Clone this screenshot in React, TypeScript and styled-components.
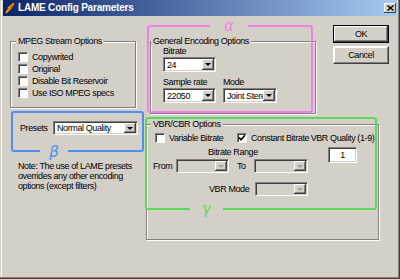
import React from 'react';
import styled, { createGlobalStyle } from 'styled-components';

const GlobalStyle = createGlobalStyle`
  html, body {
    margin: 0;
    padding: 0;
    background: #d4d0c8;
  }
  body {
    font-family: "Liberation Sans", Arial, sans-serif;
    font-size: 9px;
    letter-spacing: -0.4px;
    line-height: 10px;
    color: #000;
  }
`;

const Window = styled.div`
  position: relative;
  width: 400px;
  height: 279px;
  box-sizing: border-box;
  background: #d4d0c8;
  box-shadow: inset -1px -1px #404040, inset -2px -2px #808080, inset 1px 1px #d4d0c8, inset 2px 2px #ffffff;
  overflow: hidden;
`;

const TitleBar = styled.div`
  height: 16px;
  margin: 0 3px;
  padding: 0 1px;
  display: flex;
  align-items: center;
  background: linear-gradient(to right, #0a246a, #a6caf0);
`;

const TitleText = styled.div`
  margin-left: 2px;
  color: #fff;
  font-family: "Liberation Sans", Arial, sans-serif;
  font-weight: bold;
  font-size: 10px;
  letter-spacing: -0.2px;
`;

const CloseButton = styled.div`
  margin-left: auto;
  width: 12px;
  height: 10px;
  box-sizing: border-box;
  display: flex;
  align-items: center;
  justify-content: center;
  background: #d4d0c8;
  box-shadow: inset -1px -1px #404040, inset 1px 1px #fff;
`;

const Body = styled.div`
  display: flex;
  padding-left: 10px;
`;

const LeftColumn = styled.div`
  width: 133px;
  display: flex;
  flex-direction: column;
`;

const RightArea = styled.div`
  margin-left: 3px;
  display: flex;
  flex-direction: column;
`;

const TopRow = styled.div`
  display: flex;
  align-items: flex-start;
`;

const Group = styled.fieldset<{ $w: number; $pad: string }>`
  margin: 0;
  min-width: 0;
  width: ${p => p.$w}px;
  box-sizing: border-box;
  padding: ${p => p.$pad};
  border: 1px solid #808080;
  box-shadow: inset 1px 1px #fff, 1px 1px #fff;
`;

const Legend = styled.legend<{ $shift: number }>`
  margin-left: ${p => p.$shift}px;
  padding: 0 2px;
  line-height: 10px;
  background: #d4d0c8;
`;

const CheckRow = styled.div<{ $h?: number }>`
  display: flex;
  align-items: center;
  height: ${p => p.$h ?? 12}px;
`;

const CheckItem = styled.div<{ $w?: number; $ml?: number }>`
  display: flex;
  align-items: center;
  gap: 4px;
  white-space: nowrap;
  width: ${p => (p.$w ? `${p.$w}px` : 'auto')};
  margin-left: ${p => p.$ml ?? 0}px;
`;

const Box = styled.div`
  width: 10px;
  height: 10px;
  box-sizing: border-box;
  flex-shrink: 0;
  display: flex;
  align-items: center;
  justify-content: center;
  background: #fff;
  border: 1px solid;
  border-color: #808080 #fff #fff #808080;
  box-shadow: inset 1px 1px #404040;
`;

const SelectBox = styled.div<{ $w: number; $h?: number; $disabled?: boolean }>`
  width: ${p => p.$w}px;
  height: ${p => p.$h ?? 15}px;
  box-sizing: border-box;
  flex-shrink: 0;
  display: flex;
  padding: 1px;
  border: 1px solid;
  border-color: #808080 #fff #fff #808080;
  box-shadow: inset 1px 1px #404040, inset -1px -1px #d4d0c8;
  background: ${p => (p.$disabled ? '#d4d0c8' : '#fff')};
`;

const SelectValue = styled.div`
  flex: 1;
  min-width: 0;
  padding-left: 2px;
  overflow: hidden;
  white-space: nowrap;
  display: flex;
  align-items: center;
`;

const ArrowButton = styled.div`
  width: 12px;
  flex-shrink: 0;
  display: flex;
  align-items: center;
  justify-content: center;
  background: #d4d0c8;
  box-shadow: inset -1px -1px #404040, inset 1px 1px #fff, inset -2px -2px #808080;
`;

const Arrow = styled.div<{ $disabled?: boolean }>`
  width: 0;
  height: 0;
  border-left: 3px solid transparent;
  border-right: 3px solid transparent;
  border-top: 3px solid ${p => (p.$disabled ? '#a0a0a0' : '#000')};
`;

const FieldLabel = styled.div`
  line-height: 10px;
  white-space: nowrap;
`;

const Stack = styled.div<{ $mt?: number }>`
  display: flex;
  flex-direction: column;
  gap: 1px;
  margin-top: ${p => p.$mt ?? 0}px;
`;

const Pair = styled.div`
  display: flex;
  gap: 7px;
  margin-top: 5px;
`;

const GroupWrap = styled.div<{ $mt: number; $ml?: number }>`
  position: relative;
  margin-top: ${p => p.$mt}px;
  margin-left: ${p => p.$ml ?? 0}px;
`;

const Annotation = styled.div<{ $color: string; $top: number; $left: number; $w: number; $h: number }>`
  position: absolute;
  top: ${p => p.$top}px;
  left: ${p => p.$left}px;
  width: ${p => p.$w}px;
  height: ${p => p.$h}px;
  box-sizing: border-box;
  border: 2px solid ${p => p.$color};
  border-radius: 3px;
  pointer-events: none;
`;

const Mark = styled.div<{ $color: string; $left: number; $w: number; $top?: number; $bottom?: number }>`
  position: absolute;
  left: ${p => p.$left}px;
  width: ${p => p.$w}px;
  ${p => (p.$top !== undefined ? `top: ${p.$top}px;` : '')}
  ${p => (p.$bottom !== undefined ? `bottom: ${p.$bottom}px;` : '')}
  height: 16px;
  line-height: 16px;
  text-align: center;
  background: #d4d0c8;
  color: ${p => p.$color};
  font-family: "DejaVu Sans", sans-serif;
  font-style: italic;
  font-size: 15px;
  letter-spacing: 0;
`;

const PresetsFrame = styled.div`
  position: relative;
  margin: 3px 0 0 1px;
  width: 133px;
  height: 41px;
  box-sizing: border-box;
  border: 2px solid #4f8ff0;
  border-radius: 3px;
  padding: 8px 0 0 7px;
  display: flex;
  align-items: flex-start;
`;

const PresetsLabel = styled.div`
  width: 33px;
  line-height: 14px;
`;

const Note = styled.div`
  margin-top: 9px;
  padding-left: 8px;
  line-height: 10px;
  white-space: nowrap;
`;

const ButtonColumn = styled.div`
  margin: 9px 0 0 17px;
  display: flex;
  flex-direction: column;
  gap: 3px;
`;

const Button = styled.div<{ $default?: boolean }>`
  width: 56px;
  height: 18px;
  box-sizing: border-box;
  display: flex;
  align-items: center;
  justify-content: center;
  background: #d4d0c8;
  border: 1px solid ${p => (p.$default ? '#000' : 'transparent')};
  box-shadow: ${p =>
    p.$default
      ? 'inset -1px -1px #404040, inset 1px 1px #fff, inset -2px -2px #808080'
      : 'inset -1px -1px #808080, inset 1px 1px #fff'};
  ${p => (!p.$default ? 'border-color: #fff #404040 #404040 #fff;' : '')}
`;

const VbrBody = styled.div`
  display: flex;
`;

const VbrLeft = styled.div`
  width: 159px;
  display: flex;
  flex-direction: column;
`;

const RangeTitle = styled.div`
  margin-top: 4px;
  padding-left: 55px;
  line-height: 10px;
`;

const FromRow = styled.div`
  margin-top: 2px;
  display: flex;
  align-items: center;
  height: 14px;
`;

const RowLabel = styled.div<{ $w: number; $ml?: number }>`
  width: ${p => p.$w}px;
  margin-left: ${p => p.$ml ?? 0}px;
  white-space: nowrap;
`;

const ModeRow = styled.div`
  margin-top: 9px;
  padding-left: 56px;
  display: flex;
  align-items: center;
  height: 14px;
`;

const QualityPane = styled.div`
  width: 61px;
  display: flex;
  flex-direction: column;
  align-items: center;
`;

const QualityLabel = styled.div`
  height: 10px;
  display: flex;
  align-items: center;
  white-space: nowrap;
`;

const EditBox = styled.div`
  margin-top: 4px;
  width: 29px;
  height: 16px;
  box-sizing: border-box;
  display: flex;
  align-items: center;
  justify-content: center;
  background: #fff;
  border: 1px solid;
  border-color: #808080 #fff #fff #808080;
  box-shadow: inset 1px 1px #404040, inset -1px -1px #d4d0c8;
`;

function Select({ w, h, value, disabled }: { w: number; h?: number; value?: string; disabled?: boolean }) {
  return (
    <SelectBox $w={w} $h={h} $disabled={disabled}>
      <SelectValue>{value}</SelectValue>
      <ArrowButton>
        <Arrow $disabled={disabled} />
      </ArrowButton>
    </SelectBox>
  );
}

function Check({ label, checked, w, ml }: { label: string; checked?: boolean; w?: number; ml?: number }) {
  return (
    <CheckItem $w={w} $ml={ml}>
      <Box>
        {checked && (
          <svg width="8" height="8" viewBox="0 0 8 8">
            <path d="M1 3.5 L3 5.8 L7 1.2" fill="none" stroke="#000" strokeWidth="1.6" />
          </svg>
        )}
      </Box>
      {label}
    </CheckItem>
  );
}

function LameIcon() {
  return (
    <svg width="12" height="12" viewBox="0 0 12 12">
      <path d="M1 11 L4 6 L3.5 5.5 L9 0.8 L11 1.5 L7.5 6 L8 6.5 L2.5 11.5 Z" fill="#f4b820" stroke="#5a3000" strokeWidth="0.8" />
      <path d="M4 8 L8.5 3 M5.5 8.5 L9.5 4" stroke="#c84800" strokeWidth="0.9" />
    </svg>
  );
}

export default function App() {
  return (
    <>
      <GlobalStyle />
      <Window>
        <TitleBar>
          <LameIcon />
          <TitleText>LAME Config Parameters</TitleText>
          <CloseButton>
            <svg width="7" height="6" viewBox="0 0 7 6">
              <path d="M0.5 0.5 L6.5 5.5 M6.5 0.5 L0.5 5.5" stroke="#000" strokeWidth="1.4" />
            </svg>
          </CloseButton>
        </TitleBar>
        <Body>
          <LeftColumn>
            <GroupWrap $mt={20}>
              <Group $w={126} $pad="5px 0 8px 7px">
                <Legend $shift={-2}>MPEG Stream Options</Legend>
                <CheckRow><Check label="Copywrited" /></CheckRow>
                <CheckRow><Check label="Original" /></CheckRow>
                <CheckRow><Check label="Disable Bit Reservoir" /></CheckRow>
                <CheckRow><Check label="Use ISO MPEG specs" /></CheckRow>
              </Group>
            </GroupWrap>
            <PresetsFrame>
              <PresetsLabel>Presets</PresetsLabel>
              <Select w={85} h={14} value="Normal Quality" />
              <Mark $color="#4f8ff0" $left={27} $w={28} $bottom={-10}>β</Mark>
            </PresetsFrame>
            <Note>
              Note: The use of LAME presets
              <br />
              overrides any other encoding
              <br />
              options (except filters)
            </Note>
          </LeftColumn>
          <RightArea>
            <TopRow>
              <GroupWrap $mt={20} $ml={4}>
                <Group $w={166} $pad="0 0 10px 12px">
                  <Legend $shift={-12}>General Encoding Options</Legend>
                  <Stack>
                    <FieldLabel>Bitrate</FieldLabel>
                    <Select w={53} value="24" />
                  </Stack>
                  <Pair>
                    <Stack>
                      <FieldLabel>Sample rate</FieldLabel>
                      <Select w={53} value="22050" />
                    </Stack>
                    <Stack>
                      <FieldLabel>Mode</FieldLabel>
                      <Select w={54} value="Joint Stereo" />
                    </Stack>
                  </Pair>
                </Group>
                <Annotation $color="#f47fe8" $top={-11} $left={-3} $w={166} $h={88}>
                  <Mark $color="#f47fe8" $left={61} $w={38} $top={-9}>α</Mark>
                </Annotation>
              </GroupWrap>
              <ButtonColumn>
                <Button $default>OK</Button>
                <Button>Cancel</Button>
              </ButtonColumn>
            </TopRow>
            <GroupWrap $mt={5}>
              <Group $w={233} $pad="4px 0 43px 6px">
                <Legend $shift={-2}>VBR/CBR Options</Legend>
                <VbrBody>
                  <VbrLeft>
                    <CheckRow $h={10}>
                      <Check label="Variable Bitrate" w={82} ml={2} />
                      <Check label="Constant Bitrate" checked w={75} />
                    </CheckRow>
                    <RangeTitle>Bitrate Range</RangeTitle>
                    <FromRow>
                      <RowLabel $w={23}>From</RowLabel>
                      <Select w={53} h={14} disabled />
                      <RowLabel $w={17} $ml={8}>To</RowLabel>
                      <Select w={54} h={14} disabled />
                    </FromRow>
                    <ModeRow>
                      <RowLabel $w={46}>VBR Mode</RowLabel>
                      <Select w={53} h={14} disabled />
                    </ModeRow>
                  </VbrLeft>
                  <QualityPane>
                    <QualityLabel>VBR Quality (1-9)</QualityLabel>
                    <EditBox>1</EditBox>
                  </QualityPane>
                </VbrBody>
              </Group>
              <Annotation $color="#5ada5a" $top={-2} $left={-1} $w={232} $h={93}>
                <Mark $color="#5ada5a" $left={43} $w={33} $bottom={-9}>γ</Mark>
              </Annotation>
            </GroupWrap>
          </RightArea>
        </Body>
      </Window>
    </>
  );
}
